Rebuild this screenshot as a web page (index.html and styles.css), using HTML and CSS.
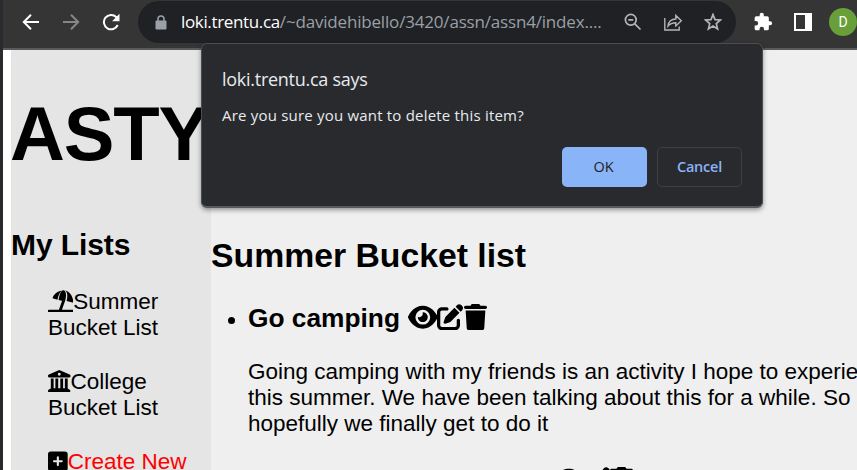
FILE: index.html
```html
<!DOCTYPE html>
<html lang="en">
<head>
<meta charset="utf-8">
<title>Bucket lists</title>
<link rel="stylesheet" href="styles.css">
</head>
<body>
<svg class="defs" width="0" height="0" aria-hidden="true">
  <symbol id="eye" viewBox="0 0 576 512"><path d="M288 32c-80.8 0-145.5 36.8-192.6 80.6C48.6 156 17.3 208 2.5 243.7c-3.3 7.9-3.3 16.7 0 24.6C17.3 304 48.6 356 95.4 399.4C142.5 443.2 207.2 480 288 480s145.5-36.8 192.6-80.6c46.8-43.5 78.1-95.4 93-131.1c3.3-7.9 3.3-16.7 0-24.6c-14.9-35.7-46.2-87.7-93-131.1C433.5 68.8 368.8 32 288 32zM144 256a144 144 0 1 1 288 0 144 144 0 1 1 -288 0zm144-64c0 35.3-28.7 64-64 64c-7.1 0-13.9-1.2-20.3-3.3c-5.5-1.8-11.9 1.6-11.7 7.4c.3 6.9 1.3 13.8 3.2 20.7c13.7 51.2 66.4 81.6 117.6 67.9s81.6-66.4 67.9-117.6c-11.1-41.5-47.8-69.4-88.6-71.1c-5.8-.2-9.2 6.1-7.4 11.7c2.1 6.4 3.3 13.2 3.3 20.3z"/></symbol>
  <symbol id="edit" viewBox="0 0 512 512"><path d="M471.6 21.7c-21.9-21.9-57.3-21.9-79.2 0L362.3 51.7l97.9 97.9 30.1-30.1c21.9-21.9 21.9-57.3 0-79.2L471.6 21.7zm-299.2 220c-6.1 6.1-10.8 13.6-13.5 21.9l-29.6 88.8c-2.9 8.6-.6 18.1 5.8 24.6s15.9 8.7 24.6 5.8l88.8-29.6c8.2-2.7 15.7-7.4 21.9-13.5L437.7 172.3 339.7 74.3 172.4 241.7zM96 64C43 64 0 107 0 160V416c0 53 43 96 96 96H352c53 0 96-43 96-96V320c0-17.7-14.3-32-32-32s-32 14.3-32 32v96c0 17.7-14.3 32-32 32H96c-17.7 0-32-14.3-32-32V160c0-17.7 14.3-32 32-32h96c17.7 0 32-14.3 32-32s-14.3-32-32-32H96z"/></symbol>
  <symbol id="trash" viewBox="0 0 448 512"><path d="M135.2 17.7L128 32H32C14.3 32 0 46.3 0 64S14.3 96 32 96H416c17.7 0 32-14.3 32-32s-14.3-32-32-32H320l-7.2-14.3C307.4 6.8 296.3 0 284.2 0H163.8c-12.1 0-23.2 6.8-28.6 17.7zM416 128H32L53.2 467c1.6 25.3 22.6 45 47.9 45H346.9c25.3 0 46.3-19.7 47.9-45L416 128z"/></symbol>
</svg>
<div class="window">
  <header class="toolbar">
    <svg class="nav" viewBox="0 0 18 18"><path d="M17 9H2M9 1.8 1.8 9 9 16.2"/></svg>
    <svg class="nav off" viewBox="0 0 18 18"><path d="M1 9h15M9 1.8 16.2 9 9 16.2"/></svg>
    <svg class="nav reload" viewBox="0 0 18 18"><path d="M15.7 12A7.2 7.2 0 1 1 14.2 4L16 6"/><path class="fill" d="M17.5.8v7.4h-7.4z"/></svg>
    <div class="address">
      <svg class="lock" viewBox="0 0 12 15"><path d="M3 6V4a3 3 0 0 1 6 0v2" fill="none" stroke="#9aa0a6" stroke-width="1.5"/><rect x=".5" y="5.5" width="11" height="9" rx="1" fill="#9aa0a6"/></svg>
      <span class="url"><span class="host">loki.trentu.ca</span><span class="path">/~davidehibello/3420/assn/assn4/index....</span></span>
      <svg class="tool zoom" viewBox="0 0 18 18"><circle cx="6.8" cy="6.8" r="5.4"/><path d="M4.3 6.8h5M10.8 10.8l5.7 5.7"/></svg>
      <svg class="tool share" viewBox="0 0 20 18"><path d="M1.8 5v12h14.4v-3.500M5 13c.6-4.400 3-7 7.800-7V2.500l5.500 5.200-5.500 5.200V9.700C9.500 9.700 7 10.600 5 13z"/></svg>
      <svg class="tool star" viewBox="0 0 18 18"><path d="m9 1.5 2 5.100 5.500.4-4.200 3.600 1.300 5.400L9 13.100 4.400 16l1.300-5.400L1.500 7 7 6.600z"/></svg>
    </div>
    <svg class="puzzle" viewBox="0 0 24 24"><path d="M20.500 11H19V7a2 2 0 0 0-2-2h-4V3.500a2.500 2.500 0 0 0-5 0V5H4a2 2 0 0 0-2 2v3.800h1.500a2.700 2.700 0 0 1 0 5.400H2V20a2 2 0 0 0 2 2h3.800v-1.500a2.700 2.700 0 0 1 5.400 0V22H17a2 2 0 0 0 2-2v-4h1.500a2.500 2.500 0 0 0 0-5z"/></svg>
    <span class="panel"></span>
    <span class="avatar">D</span>
  </header>
  <div class="page">
    <aside class="sidebar">
      <h1>ASTY</h1>
      <h2>My Lists</h2>
      <ul>
        <li><svg class="ico wide" viewBox="0 0 576 512"><path d="M24 448h225l76-214 61 22-69 192h235a24 24 0 0 1 0 64H24a24 24 0 0 1 0-64zM104 180C133 92 214 26 311 9c-44 44-77 116-96 210L119 193c-9-2-17-5-15-13zM346 5c56 2 86 87 49 222l-9 36-144-38C261 91 301 2 346 5zM393 7c111 43 184 149 179 266 0 9-9 15-18 12l-130-34C451 146 447 64 393 7z"/></svg>Summer<br>Bucket List</li>
        <li><svg class="ico" viewBox="0 0 512 512"><path fill-rule="evenodd" d="M244 3 20 102C8 107 0 119 0 133v11a24 24 0 0 0 24 24h464a24 24 0 0 0 24-24v-11c0-14-8-26-20-31L268 3q-12-5-24 0zM256 64a32 32 0 1 1 0 64 32 32 0 0 1 0-64zM64 192h64v224h40V192h64v224h48V192h64v224h40V192h64v228l44 29c8 5 16 12 16 31a32 32 0 0 1-32 32H32A32 32 0 0 1 0 480c0-17 7-25 20-34l44-26z"/></svg>College<br>Bucket List</li>
        <li class="create"><svg class="ico small" viewBox="0 0 448 512"><path fill-rule="evenodd" d="M64 32h320a64 64 0 0 1 64 64v320a64 64 0 0 1-64 64H64a64 64 0 0 1-64-64V96a64 64 0 0 1 64-64zM200 168v64h-64a24 24 0 0 0 0 48h64v64a24 24 0 0 0 48 0v-64h64a24 24 0 0 0 0-48h-64v-64a24 24 0 0 0-48 0z"/></svg>Create New</li>
      </ul>
    </aside>
    <main class="content">
      <h2>Summer Bucket list</h2>
      <ul>
        <li>
          <h3>Go camping <span class="actions"><svg class="eye"><use href="#eye"/></svg><svg class="edit"><use href="#edit"/></svg><svg class="trash"><use href="#trash"/></svg></span></h3>
          <p>Going camping with my friends is an activity I hope to experience<br>this summer. We have been talking about this for a while. So<br>hopefully we finally get to do it</p>
        </li>
        <li class="next">
          <h3><span class="actions"><svg class="eye"><use href="#eye"/></svg><svg class="edit"><use href="#edit"/></svg><svg class="trash"><use href="#trash"/></svg></span></h3>
        </li>
      </ul>
    </main>
  </div>
</div>
<div class="dialog">
  <div class="title">loki.trentu.ca says</div>
  <div class="message">Are you sure you want to delete this item?</div>
  <div class="buttons"><button class="ok">OK</button><button class="cancel">Cancel</button></div>
</div>
</body>
</html>
```
FILE: styles.css
```css
* { box-sizing: border-box; }
body { margin: 0; width: 857px; height: 470px; overflow: hidden; background: #292a2d; font-family: "Liberation Sans", Arial, sans-serif; color: #000; }
.defs { display: block; }
.window { margin-left: 3px; height: 470px; overflow: hidden; background: #fff; }
h1, h2, h3, p, ul { margin: 0; padding: 0; font-weight: 700; }
ul { list-style: none; }

.toolbar { display: flex; align-items: center; height: 50px; padding: 0 0 4px 19px; background: #353535; border-bottom: 2px solid #5b5b5d; }
.nav { width: 18px; height: 18px; margin-right: 22px; fill: none; stroke: #fff; stroke-width: 2; flex: none; }
.nav.off { stroke: #868686; }
.nav.reload { margin-right: 18px; }
.nav .fill { fill: #fff; stroke: none; }
.address { display: flex; align-items: center; width: 598px; height: 42px; padding-left: 17px; border-radius: 21px; background: #202124; flex: none; }
.lock { width: 12px; height: 15px; flex: none; }
.url { width: 443px; margin-left: 14px; white-space: nowrap; font: 17px/24px "Open Sans", "Noto Sans", sans-serif; flex: none; }
.host { color: #fff; letter-spacing: -0.35px; }
.path { color: #9aa0a6; letter-spacing: -0.18px; }
.tool { fill: none; stroke: #b4b5b7; stroke-width: 1.7; height: 18px; flex: none; }
.zoom { width: 18px; }
.share { width: 20px; margin-left: 21px; stroke-width: 1.4; }
.star { width: 18px; margin-left: 21px; }
.puzzle { width: 20px; height: 20px; margin-left: 17px; fill: #fff; flex: none; }
.panel { width: 18px; height: 18px; margin-left: 21px; border: 2px solid #fff; border-right-width: 7px; flex: none; }
.avatar { display: flex; align-items: center; justify-content: center; width: 28px; height: 28px; margin-left: 17px; border-radius: 50%; background: #689f38; color: #fff; font: 14px Roboto, sans-serif; flex: none; }

.page { display: flex; height: 420px; padding-left: 8px; font-size: 22.5px; line-height: 26px; }
.sidebar { width: 200px; background: #e5e5e5; overflow: hidden; flex: none; white-space: nowrap; }
.sidebar h1 { margin: 41px 0 0 -1px; font-size: 76px; line-height: 86px; letter-spacing: -1.2px; }
.sidebar h2 { margin-top: 51px; font-size: 30px; line-height: 34px; letter-spacing: -0.1px; }
.sidebar ul { margin: 27px 0 0 37px; }
.sidebar li { margin-bottom: 28px; font-weight: 400; }
.create { color: #f00; }
.ico { width: 22.5px; height: 22.5px; vertical-align: -3px; }
.ico.wide { width: 25.3px; }
.ico.small { width: 19.7px; color: #000; }

.content { flex: 1; min-width: 0; overflow: hidden; background: #efefef; white-space: nowrap; }
.content h2 { margin-top: 186px; font-size: 33.75px; line-height: 38px; }
.content ul { margin: 29px 0 0 37px; list-style: disc; }
.content h3 { font-size: 26.3px; line-height: 30px; }
.content p { margin-top: 26px; font-weight: 400; }
.actions { display: inline-flex; margin-left: 0.5px; vertical-align: -3px; }
.actions svg { height: 26.3px; }
.eye { width: 29.6px; }
.edit { width: 26.3px; }
.trash { width: 23px; }
.next { margin-top: 29px; }
.next .actions { margin-left: 306px; }

.dialog { position: absolute; left: 201px; top: 43px; width: 562px; height: 165px; padding: 22px 20px 20px; border: 1px solid #4a4e52; border-bottom: 2px solid #555a5e; border-radius: 6px; background: #292a2d; box-shadow: 0 2px 5px rgba(0,0,0,.4); color: #e8eaed; font-family: "Open Sans", "Noto Sans", sans-serif; white-space: nowrap; }
.title { font-size: 18px; line-height: 26px; letter-spacing: -0.27px; }
.message { margin-top: 11px; font-size: 15px; line-height: 24px; letter-spacing: 0.2px; }
.buttons { display: flex; justify-content: flex-end; gap: 10px; margin-top: 20px; }
.buttons button { width: 85px; height: 40px; padding: 0 2px 2px 0; border-radius: 5px; font: 500 14.5px "Open Sans", "Noto Sans", sans-serif; }
.ok { border: 0; background: #8ab4f8; color: #202124; }
.cancel { border: 1px solid #3c4043; background: transparent; color: #8ab4f8; }
.buttons .cancel { padding-right: 0; font-weight: 600; letter-spacing: -0.2px; }
```
